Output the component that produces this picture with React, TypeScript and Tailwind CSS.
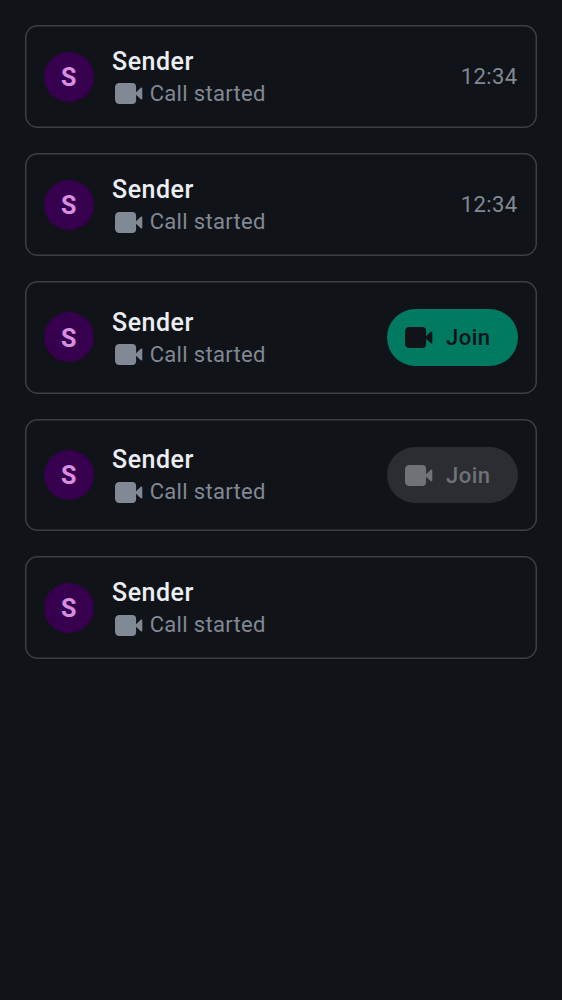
type Action = { kind: 'time'; label: string } | { kind: 'join'; enabled: boolean } | { kind: 'none' };

function Camera({ className }: { className: string }) {
  return (
    <svg className={className} viewBox="0 0 28 21" fill="currentColor">
      <path d="M4.2 0H17.2A3.9 3.9 0 0 1 21.1 3.9V9.3L25.5 4.9C26.3 4.1 27.3 4.4 27.3 5.4V15.6C27.3 16.6 26.3 16.9 25.5 16.1L21.1 11.7V17.1A3.9 3.9 0 0 1 17.2 21H4.2A4.2 4.2 0 0 1 0 16.8V4.2A4.2 4.2 0 0 1 4.2 0Z" />
    </svg>
  );
}

function CallCard({ action }: { action: Action }) {
  return (
    <div className={`flex items-center rounded-[12.5px] pr-[19px] pl-[18.7px] shadow-[inset_0_0_0_1.5px_#3c3f44] ${action.kind === 'join' ? 'h-[112.4px]' : 'h-[103px]'}`}>
      <div className="flex size-[50px] shrink-0 items-center justify-center rounded-full bg-[#37004e] pt-[2px] text-[25px] font-bold text-[#d88fe0]">S</div>
      <div className="ml-[18.4px] flex-1 pt-[1.8px]">
        <div className="text-[25px] leading-[33px] font-medium tracking-[0.5px] text-[#ebeef2]">Sender</div>
        <div className="flex items-center text-[22px] leading-[32px] tracking-[0.32px] text-[#808994]">
          <Camera className="mr-[7px] ml-[2.6px] h-[21px] w-[28px]" />
          Call started
        </div>
      </div>
      {action.kind === 'time' && <div className="pr-[0.5px] text-[22px] tracking-[0.38px] text-[#808994]">{action.label}</div>}
      {action.kind === 'join' && (
        <button
          disabled={!action.enabled}
          className={`flex h-[56.2px] w-[131.2px] items-center rounded-full pl-[18px] text-[22px] font-medium tracking-[0.5px] ${action.enabled ? 'bg-[#007a61] text-[#101317]' : 'bg-[#2b2d32] text-[#6f7277]'}`}
        >
          <Camera className="mr-[13.2px] h-[21px] w-[28px]" />
          Join
        </button>
      )}
    </div>
  );
}

const calls: Action[] = [
  { kind: 'time', label: '12:34' },
  { kind: 'time', label: '12:34' },
  { kind: 'join', enabled: true },
  { kind: 'join', enabled: false },
  { kind: 'none' },
];

export default function App() {
  return (
    <div className="flex min-h-screen flex-col gap-[25.15px] bg-[#101317] p-[25px] font-['Roboto',sans-serif]">
      {calls.map((action, i) => (
        <CallCard key={i} action={action} />
      ))}
    </div>
  );
}
